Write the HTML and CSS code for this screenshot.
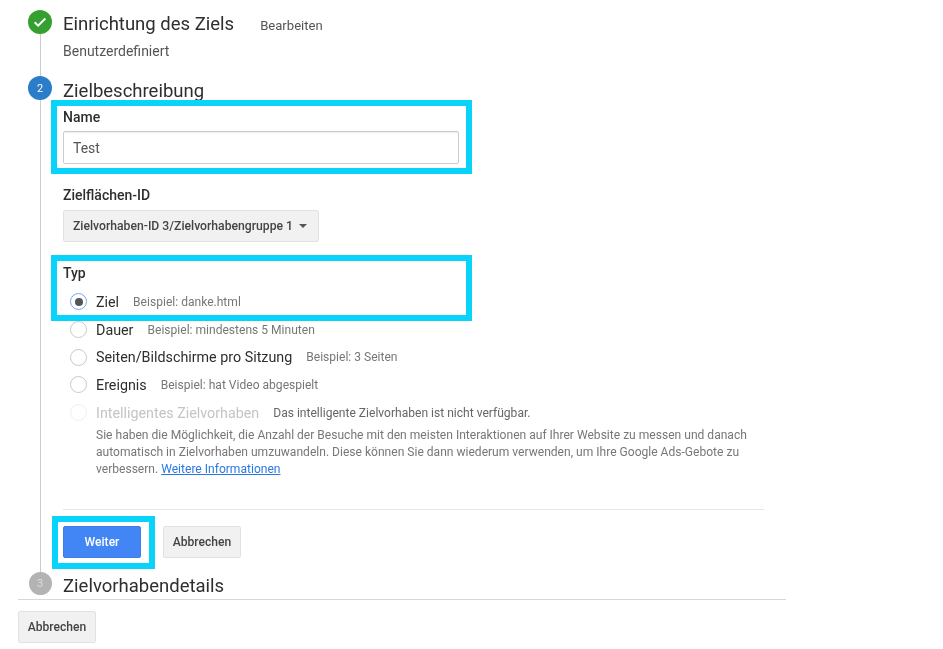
FILE: index.html
```html
<!DOCTYPE html>
<html lang="de">
<head>
<meta charset="utf-8">
<title>Zielvorhaben</title>
<link rel="stylesheet" href="styles.css">
</head>
<body>
<main class="page">
  <div class="steps">
    <section class="step step-one">
      <div class="rail">
        <span class="badge badge-done">
          <svg viewBox="0 0 24 24" width="16" height="16"><path d="M4 12.5l5.2 5L20 6.8" fill="none" stroke="#fff" stroke-width="3"/></svg>
        </span>
        <span class="line"></span>
      </div>
      <div class="body">
        <div class="title-row">
          <h2 class="title">Einrichtung des Ziels</h2>
          <a class="edit">Bearbeiten</a>
        </div>
        <p class="sub">Benutzerdefiniert</p>
      </div>
    </section>

    <section class="step step-two">
      <div class="rail">
        <span class="badge badge-active">2</span>
        <span class="line"></span>
      </div>
      <div class="body">
        <h2 class="title">Zielbeschreibung</h2>
        <div class="field field-name">
          <span class="highlight hl-name"></span>
          <label class="label">Name</label>
          <div class="input">Test</div>
        </div>
        <div class="field field-id">
          <label class="label">Zielflächen-ID</label>
          <div class="select">Zielvorhaben-ID 3/Zielvorhabengruppe 1<span class="caret"></span></div>
        </div>
        <div class="field field-type">
          <span class="highlight hl-type"></span>
          <label class="label">Typ</label>
          <ul class="radios">
            <li class="radio"><span class="dot dot-on"></span><span class="r-name">Ziel</span><span class="r-hint">Beispiel: danke.html</span></li>
            <li class="radio"><span class="dot"></span><span class="r-name">Dauer</span><span class="r-hint">Beispiel: mindestens 5 Minuten</span></li>
            <li class="radio"><span class="dot"></span><span class="r-name">Seiten/Bildschirme pro Sitzung</span><span class="r-hint">Beispiel: 3 Seiten</span></li>
            <li class="radio"><span class="dot"></span><span class="r-name">Ereignis</span><span class="r-hint">Beispiel: hat Video abgespielt</span></li>
            <li class="radio radio-off"><span class="dot"></span><span class="r-name">Intelligentes Zielvorhaben</span><span class="r-hint">Das intelligente Zielvorhaben ist nicht verfügbar.</span></li>
          </ul>
          <p class="help">Sie haben die Möglichkeit, die Anzahl der Besuche mit den meisten Interaktionen auf Ihrer Website zu messen und danach automatisch in Zielvorhaben umzuwandeln. Diese können Sie dann wiederum verwenden, um Ihre Google Ads-Gebote zu verbessern. <a class="link">Weitere Informationen</a></p>
        </div>
        <div class="actions">
          <span class="highlight hl-next"></span>
          <button class="btn btn-primary">Weiter</button>
          <button class="btn">Abbrechen</button>
        </div>
      </div>
    </section>

    <section class="step step-three">
      <div class="rail">
        <span class="badge badge-idle">3</span>
      </div>
      <div class="body">
        <h2 class="title">Zielvorhabendetails</h2>
      </div>
    </section>
  </div>
  <footer class="footer">
    <button class="btn">Abbrechen</button>
  </footer>
</main>
</body>
</html>
```
FILE: styles.css
```css
* { box-sizing: border-box; }
html, body { margin: 0; padding: 0; background: #fff; }
body { font-family: Roboto, "Liberation Sans", sans-serif; color: #333; overflow: hidden; height: 649px; }
.page { width: 768px; margin-left: 18px; padding-top: 10px; filter: blur(0.35px); }
.steps { padding-left: 10px; }
.step { display: flex; gap: 11px; }
.rail { width: 24px; flex: none; display: flex; flex-direction: column; align-items: center; }
.line { flex: 1; width: 1px; background: #ccc; }
.badge { width: 24px; height: 24px; flex: none; border-radius: 50%; display: flex; align-items: center; justify-content: center; color: #fff; font-size: 11px; }
.badge-done { background: #34a02f; }
.badge-active { background: #2b7cc9; }
.badge-idle { background: #b3b3b3; width: 23px; height: 23px; color: #ddd; }
.body { flex: 1; min-width: 0; position: relative; }
.title { margin: 0; font-weight: 400; font-size: 18.5px; line-height: 24px; color: #2e2e2e; }
.step-one { height: 66px; }
.title-row { display: flex; align-items: baseline; gap: 26px; margin-top: 2px; }
.edit { font-size: 13.1px; color: #555; }
.sub { margin: 5px 0 0; font-size: 14px; line-height: 20px; color: #555; }
.step-two { height: 496px; }
.step-two .title { margin-top: 3px; }
.field { position: relative; }
.label { display: block; font-size: 14px; font-weight: 500; line-height: 20px; color: #2e2e2e; }
.field-name { margin-top: 4px; }
.input { margin-top: 4px; width: 396px; height: 33px; border: 1px solid #ccc; border-radius: 2px; padding: 0 9px; font-size: 14px; line-height: 32px; color: #555; box-shadow: inset 0 1px 1px #eee; }
.field-id { margin-top: 21px; }
.select { margin-top: 5px; width: 256px; height: 32px; display: flex; align-items: center; justify-content: space-between; padding: 0 11px 0 9px; background: #f1f1f1; border: 1px solid #e2e2e2; border-radius: 2px; font-size: 12.2px; font-weight: 500; color: #444; }
.caret { width: 0; height: 0; border: 4px solid transparent; border-top-color: #555; border-bottom: 0; }
.field-type { margin-top: 21px; }
.radios { list-style: none; margin: 5px 0 0; padding: 0 0 0 7px; }
.radio { display: flex; align-items: center; height: 27.7px; }
.dot { width: 17px; height: 17px; flex: none; margin-right: 9px; border-radius: 50%; border: 1px solid #c8c8c8; background: #fff; position: relative; }
.dot-on { border-color: #7aa5f0; }
.dot-on::after { content: ""; position: absolute; inset: 3.5px; border-radius: 50%; background: #555; }
.r-name { font-size: 14.3px; color: #2e2e2e; margin-right: 14px; }
.r-hint { font-size: 12.07px; color: #777; }
.radio-off .dot { border-color: #eee; }
.radio-off .r-name { color: #c4c4c4; }
.radio-off .r-hint { color: #666; }
.help { margin: 1px 0 0 33px; width: 668px; font-size: 12.07px; line-height: 16.7px; color: #777; }
.link { color: #2a78e4; text-decoration: underline; }
.actions { display: flex; gap: 22px; position: relative; margin-top: 31px; padding-top: 16px; border-top: 1px solid #e6e6e6; width: 701px; }
.btn { width: 78px; height: 32px; padding: 0; background: #f1f1f1; border: 1px solid #e2e2e2; border-radius: 2px; font: 500 12.1px Roboto, "Liberation Sans", sans-serif; color: #444; }
.btn-primary { background: #4285f4; border-color: #3f7de6; color: #fff; }
.step-three { height: 27px; }
.step-three .title { margin-top: 2px; }
.footer { border-top: 1px solid #d8d8d8; padding-top: 11px; }
.highlight { position: absolute; border: 6px solid #08d4fb; pointer-events: none; }
.hl-name { left: -12px; top: -7px; width: 421px; height: 74px; }
.hl-type { left: -12px; top: -8px; width: 421px; height: 66px; }
.hl-next { left: -11px; top: 6px; width: 103px; height: 53px; }
```
